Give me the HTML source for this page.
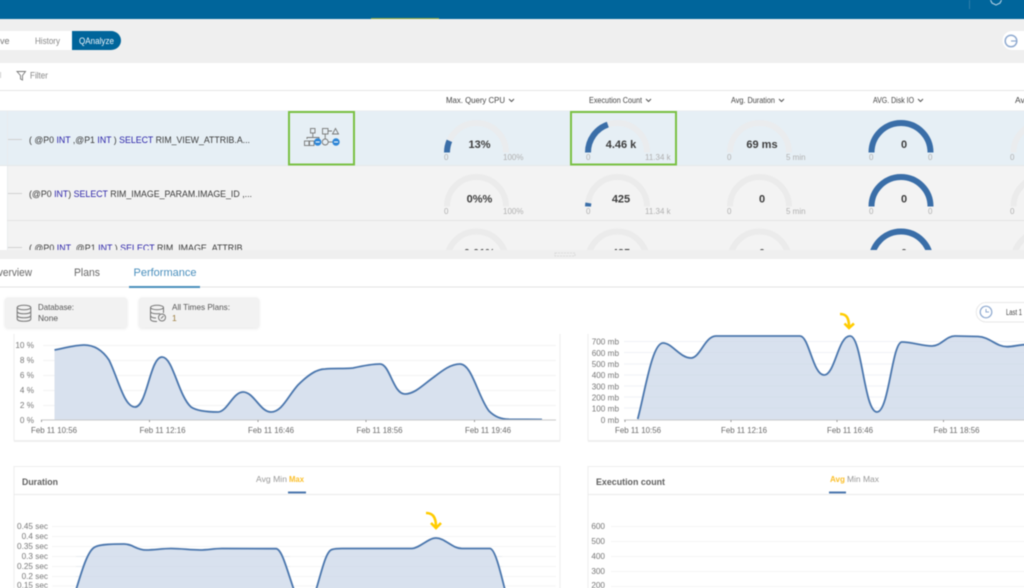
<!DOCTYPE html>
<html lang="en">
<head>
<meta charset="utf-8">
<title>QAnalyze Performance</title>
<style>
html,body{margin:0;padding:0;width:1024px;height:588px;overflow:hidden;background:#fff}
body{position:relative}
svg{display:block;position:absolute;left:-10px;top:-10px;filter:blur(.5px)}
text{font-family:"Liberation Sans",sans-serif;fill:#555}
.s{font-size:8px;fill:#b0b0b0}
.v{font-size:11px;font-weight:bold;fill:#3d3d3d;text-anchor:middle}
.h{font-size:8.5px;fill:#444}
.r{font-size:9.5px;fill:#3a3a3a}
.r tspan{fill:#2a22a8}
.a{font-size:8.5px;fill:#6a6a6a}
.ye{font-size:8.2px;fill:#777;text-anchor:end}
.t{font-size:11px;fill:#666}
.g{stroke:#f3f3f3;stroke-width:1}
.gb{fill:none;stroke:#eaecee;stroke-width:6}
.gf{fill:none;stroke:#3a6ea8;stroke-width:6}
.ch{fill:none;stroke:#555;stroke-width:1}
.ar{fill:#d8e1ee}
.ln{fill:none;stroke:#4a76ad;stroke-width:1.8}
.arrow{fill:none;stroke:#fc0;stroke-width:2.6}
</style>
</head>
<body>
<svg width="1044" height="608" viewBox="-10 -10 1044 608" xmlns="http://www.w3.org/2000/svg">
<rect x="-10" y="-10" width="1044" height="608" fill="#fff"/>

<!-- top bar -->
<rect x="-10" y="-10" width="1044" height="29" fill="#00659b"/>
<rect x="371" y="18" width="68" height="1" fill="#8fa63a"/>
<rect x="969" y="0" width="1" height="9" fill="#2f7fab"/>
<path d="M990.500 0 L992 3 L996 5 L1000 3 L1001.500 0" fill="none" stroke="#a9cbe0" stroke-width="1.200"/>

<!-- gray band -->
<rect x="-10" y="19" width="1044" height="44" fill="#efefef"/>
<rect x="-10" y="31" width="82" height="19" fill="#fff"/>
<text x="0" y="44" style="fill:#777;font-size:9px">ve</text>
<text x="35" y="44" textLength="25" lengthAdjust="spacingAndGlyphs" style="fill:#888;font-size:9px">History</text>
<path d="M72 31 H111 A10 9.500 0 0 1 111 50 H72 Z" fill="#00659b"/>
<text x="79" y="44" textLength="35" lengthAdjust="spacingAndGlyphs" style="fill:#eef5fa;font-size:9px">QAnalyze</text>
<path d="M1034 31 H1012 A9.500 9.500 0 0 0 1012 50 H1034 Z" fill="#fff"/>
<circle cx="1011" cy="41" r="5.800" fill="none" stroke="#8faad0" stroke-width="1.500"/>
<path d="M1011 41 H1016" stroke="#8faad0" stroke-width="1.200" fill="none"/>

<!-- filter bar -->
<rect x="-10" y="63" width="1044" height="27" fill="#fff"/>
<rect x="-10" y="90" width="1044" height="1" fill="#e6e6e6"/>
<path d="M17 71.500 H25.500 L22.500 75.500 V80 L20.500 79 V75.500 Z" fill="none" stroke="#777" stroke-width=".9"/>
<text x="30" y="78.500" textLength="18" lengthAdjust="spacingAndGlyphs" style="fill:#888;font-size:9.500px">Filter</text>
<rect x="0" y="72" width="1" height="6" fill="#ccc"/>

<!-- header -->
<rect x="-10" y="110.500" width="1044" height="1" fill="#e8e8e8"/>
<text class="h" x="446" y="103" textLength="59" lengthAdjust="spacingAndGlyphs">Max. Query CPU</text>
<path class="ch" d="M509 99 L511.500 101.500 L514 99"/>
<text class="h" x="589" y="103" textLength="53" lengthAdjust="spacingAndGlyphs">Execution Count</text>
<path class="ch" d="M646 99 L648.500 101.500 L651 99"/>
<text class="h" x="731" y="103" textLength="44" lengthAdjust="spacingAndGlyphs">Avg. Duration</text>
<path class="ch" d="M779 99 L781.500 101.500 L784 99"/>
<text class="h" x="873" y="103" textLength="41" lengthAdjust="spacingAndGlyphs">AVG. Disk IO</text>
<path class="ch" d="M918 99 L920.500 101.500 L923 99"/>
<text class="h" x="1015" y="103">Avg</text>

<!-- rows -->
<rect x="-10" y="111" width="1044" height="54" fill="#e6eff5"/>
<rect x="-10" y="165" width="17" height="86" fill="#fff"/>
<rect x="7" y="165" width="1027" height="86" fill="#f3f3f3"/>
<rect x="7" y="111" width="1" height="140" fill="#e9ecee"/>
<rect x="-10" y="165" width="1044" height="1" fill="#e4e8ea"/>
<rect x="7" y="220" width="1027" height="1" fill="#e4e4e4"/>
<rect x="8" y="139" width="14" height="1" fill="#d0d0d0"/>
<rect x="8" y="193" width="14" height="1" fill="#d0d0d0"/>
<rect x="8" y="247" width="14" height="1" fill="#d0d0d0"/>

<text class="r" x="29" y="143" textLength="221" lengthAdjust="spacingAndGlyphs">( @P0 <tspan>INT</tspan> ,@P1 <tspan>INT</tspan> ) <tspan>SELECT</tspan> RIM_VIEW_ATTRIB.A...</text>
<text class="r" x="29" y="197" textLength="223" lengthAdjust="spacingAndGlyphs">(@P0 <tspan>INT</tspan>) <tspan>SELECT</tspan> RIM_IMAGE_PARAM.IMAGE_ID ,...</text>
<text class="r" x="29" y="251" textLength="221" lengthAdjust="spacingAndGlyphs">( @P0 <tspan>INT</tspan> ,@P1 <tspan>INT</tspan> ) <tspan>SELECT</tspan> RIM_IMAGE_ATTRIB...</text>

<!-- row 1 gauges -->
<path class="gb" d="M447 152.500 A29.500 29.500 0 0 1 506 152.500"/>
<path class="gf" d="M447 152.500 A29.500 29.500 0 0 1 449.400 140.800"/>
<text class="v" x="479.500" y="148">13%</text>
<text class="s" x="444" y="160">0</text><text class="s" x="503" y="160">100%</text>

<path class="gb" d="M588 152.500 A29.500 29.500 0 0 1 647 152.500"/>
<path class="gf" d="M588 152.500 A29.500 29.500 0 0 1 607.800 124.600"/>
<text class="v" x="621" y="148">4.46 k</text>
<text class="s" x="586" y="160">0</text><text class="s" x="645" y="160">11.34 k</text>

<path class="gb" d="M730 152.500 A29.500 29.500 0 0 1 789 152.500"/>
<text class="v" x="762" y="148">69 ms</text>
<text class="s" x="727" y="160">0</text><text class="s" x="786" y="160">5 min</text>

<path class="gf" d="M871.500 152.500 A29.500 29.500 0 0 1 930.500 152.500"/>
<text class="v" x="904" y="148">0</text>
<text class="s" x="869" y="160">0</text><text class="s" x="928" y="160">0</text>

<path class="gb" d="M1013.500 152.500 A29.500 29.500 0 0 1 1072.500 152.500"/>
<text class="s" x="1010" y="160">0</text>

<!-- row 2 gauges -->
<path class="gb" style="stroke:#ebebeb" d="M447 206.500 A29.500 29.500 0 0 1 506 206.500"/>
<text class="v" x="479.500" y="202.500">0%%</text>
<text class="s" x="444" y="214">0</text><text class="s" x="503" y="214">100%</text>

<path class="gb" style="stroke:#ebebeb" d="M588 206.500 A29.500 29.500 0 0 1 647 206.500"/>
<path class="gf" d="M588 206.500 A29.500 29.500 0 0 1 588.400 203"/>
<text class="v" x="621" y="202.500">425</text>
<text class="s" x="586" y="214">0</text><text class="s" x="645" y="214">11.34 k</text>

<path class="gb" style="stroke:#ebebeb" d="M730 206.500 A29.500 29.500 0 0 1 789 206.500"/>
<text class="v" x="762" y="202.500">0</text>
<text class="s" x="727" y="214">0</text><text class="s" x="786" y="214">5 min</text>

<path class="gf" d="M871.500 206.500 A29.500 29.500 0 0 1 930.500 206.500"/>
<text class="v" x="904" y="202.500">0</text>
<text class="s" x="869" y="214">0</text><text class="s" x="928" y="214">0</text>

<path class="gb" style="stroke:#ebebeb" d="M1013.500 206.500 A29.500 29.500 0 0 1 1072.500 206.500"/>
<text class="s" x="1010" y="214">0</text>

<!-- row 3 gauges -->
<path class="gb" style="stroke:#ebebeb" d="M447 261 A29.500 29.500 0 0 1 506 261"/>
<text class="v" x="479.500" y="256.500">0.01%</text>
<path class="gb" style="stroke:#ebebeb" d="M588 261 A29.500 29.500 0 0 1 647 261"/>
<text class="v" x="621" y="256.500">425</text>
<path class="gb" style="stroke:#ebebeb" d="M730 261 A29.500 29.500 0 0 1 789 261"/>
<text class="v" x="762" y="256.500">0</text>
<path class="gf" d="M871.500 261 A29.500 29.500 0 0 1 930.500 261"/>
<text class="v" x="904" y="256.500">0</text>
<path class="gb" style="stroke:#ebebeb" d="M1013.500 261 A29.500 29.500 0 0 1 1072.500 261"/>

<!-- green highlight boxes -->
<rect x="289" y="112" width="65" height="52.500" fill="none" stroke="#7ac143" stroke-width="2"/>
<rect x="571" y="112" width="105" height="52.500" fill="none" stroke="#7ac143" stroke-width="2"/>

<!-- plan icon -->
<g fill="none" stroke="#777" stroke-width=".9">
<rect x="310.500" y="128.500" width="4.500" height="4.500"/>
<path d="M312.800 133 V137 M307 139 V137.500 H319 V139"/>
<rect x="304.500" y="141" width="4.500" height="4.500"/>
<rect x="309.500" y="141" width="4.500" height="4.500"/>
<rect x="322.500" y="128.500" width="5.500" height="5.500"/>
<path d="M325.200 134 V139.500 M328 131 H332"/>
<path d="M335.500 128.500 L338.500 134 H332.500 Z"/>
<circle cx="325.200" cy="142" r="3"/>
<path d="M328 142 H334"/>
</g>
<circle cx="317.700" cy="142" r="3.700" fill="#2f86d6"/>
<rect x="315.700" y="141.500" width="4" height="1" fill="#fff"/>
<circle cx="336" cy="142" r="3.700" fill="#2f86d6"/>
<rect x="334" y="141.500" width="4" height="1" fill="#fff"/>

<!-- splitter -->
<rect x="-10" y="250" width="1044" height="9" fill="#efefef"/>
<rect x="555" y="253" width="20" height="3" fill="none" stroke="#d4d4d4" stroke-width=".8" stroke-dasharray="2 1"/>

<!-- tabs -->
<rect x="-10" y="259" width="1044" height="75" fill="#fff"/>
<text class="t" x="-10" y="276" textLength="42" lengthAdjust="spacingAndGlyphs">Overview</text>
<text class="t" x="74" y="276" textLength="26" lengthAdjust="spacingAndGlyphs">Plans</text>
<text class="t" x="133.500" y="276" textLength="63" lengthAdjust="spacingAndGlyphs" style="fill:#4a8fbd">Performance</text>
<rect x="-10" y="286.500" width="1044" height="1" fill="#e4e4e4"/>
<rect x="129" y="286" width="71" height="2" fill="#4a90bd"/>

<!-- info cards -->
<g style="filter:drop-shadow(0 1px 1.500px rgba(0,0,0,.1))">
<rect x="5" y="297.500" width="122" height="30" rx="3" fill="#f2f2f2"/>
<rect x="139" y="297.500" width="120" height="30" rx="3" fill="#f2f2f2"/>
</g>
<g fill="none" stroke="#777" stroke-width="1">
<ellipse cx="24" cy="307.500" rx="6.800" ry="2.300"/>
<path d="M17.200 307.500 V319 C17.200 322 30.800 322 30.800 319 V307.500 M17.200 311.500 C17.200 314.500 30.800 314.500 30.800 311.500 M17.200 315.500 C17.200 318.500 30.800 318.500 30.800 315.500"/>
<ellipse cx="157" cy="307.500" rx="6.500" ry="2.200"/>
<path d="M150.500 307.500 V319 C150.500 321 154 321.500 157 321.500 M163.500 307.500 V313 M150.500 311.500 C150.500 314 158 314 160 313.500 M150.500 315.500 C150.500 317.500 154 318 156 318"/>
<circle cx="162" cy="317.500" r="3.500"/>
<path d="M161 318.500 L163.500 316"/>
</g>
<text x="38" y="310" textLength="36" lengthAdjust="spacingAndGlyphs" style="font-size:8.500px;fill:#555">Database:</text>
<text x="38" y="321" textLength="20" lengthAdjust="spacingAndGlyphs" style="font-size:8.500px;fill:#555">None</text>
<text x="172" y="310" textLength="58" lengthAdjust="spacingAndGlyphs" style="font-size:8.500px;fill:#555">All Times Plans:</text>
<text x="172" y="321" style="font-size:8.500px;fill:#9a7a3a">1</text>

<!-- time pill -->
<path d="M1034 302.500 H986 A9.500 9.500 0 0 0 986 322 H1034" fill="#fff" stroke="#e8e8e8"/>
<circle cx="986" cy="312" r="5.800" fill="none" stroke="#8faad0" stroke-width="1.200"/>
<path d="M986 309 V312 H989" fill="none" stroke="#8faad0" stroke-width="1"/>
<text x="1006" y="315" textLength="16" lengthAdjust="spacingAndGlyphs" style="font-size:8px;fill:#444">Last 1</text>

<!-- CHART 1 card -->
<path d="M14 334 V440.500 H560 V334" fill="#fff" stroke="#eeeeee"/>
<rect x="14" y="440.500" width="546" height="1.500" fill="#efefef"/>
<g class="g">
<path d="M43 345.500 H556 M43 360.500 H556 M43 375.500 H556 M43 390.500 H556 M43 405.500 H556"/>
</g>
<path class="ar" d="M54.500 350 C65 348 75 345 84 345 C95 345 103 351 109 360 C118 378 124 407 135 407 C147 407 150 357 162 357 C173 357 178 395 191 407 C197 411 208 412 218 412 C227 412 233 392 243 392 C254 392 260 412 271 412 C282 412 288 396 298 385 C307 376 316 369 325 369 C335 368 343 369 353 368 C362 366 372 364 380 364 C390 364 393 394 405 394 C415 394 424 384 434 377 C443 370 451 364 460 364 C472 364 478 397 489 411 C495 417 501 419 509 419.300 L542 419.500 V420 H54.500 Z"/>
<path class="ln" d="M54.500 350 C65 348 75 345 84 345 C95 345 103 351 109 360 C118 378 124 407 135 407 C147 407 150 357 162 357 C173 357 178 395 191 407 C197 411 208 412 218 412 C227 412 233 392 243 392 C254 392 260 412 271 412 C282 412 288 396 298 385 C307 376 316 369 325 369 C335 368 343 369 353 368 C362 366 372 364 380 364 C390 364 393 394 405 394 C415 394 424 384 434 377 C443 370 451 364 460 364 C472 364 478 397 489 411 C495 417 501 419 509 419.300 L542 419.500"/>
<rect x="41" y="419.500" width="515" height="1" fill="#c9c9c9"/>
<path d="M41.500 420 V422 M149.500 420 V422 M258 420 V422 M366 420 V422 M474.500 420 V422" stroke="#999" stroke-width="1"/>
<text class="ye" x="34" y="348">10 %</text>
<text class="ye" x="34" y="363">8 %</text>
<text class="ye" x="34" y="378">6 %</text>
<text class="ye" x="34" y="393">4 %</text>
<text class="ye" x="34" y="408">2 %</text>
<text class="ye" x="34" y="423">0 %</text>
<text class="a" x="31" y="433" textLength="46" lengthAdjust="spacingAndGlyphs">Feb 11 10:56</text>
<text class="a" x="139.500" y="433" textLength="46" lengthAdjust="spacingAndGlyphs">Feb 11 12:16</text>
<text class="a" x="248" y="433" textLength="46" lengthAdjust="spacingAndGlyphs">Feb 11 16:46</text>
<text class="a" x="356.500" y="433" textLength="46" lengthAdjust="spacingAndGlyphs">Feb 11 18:56</text>
<text class="a" x="465" y="433" textLength="46" lengthAdjust="spacingAndGlyphs">Feb 11 19:46</text>

<!-- CHART 2 card -->
<path d="M588 334 V440.500 H1034" fill="#fff" stroke="#eeeeee"/>
<rect x="588" y="440.500" width="446" height="1.500" fill="#efefef"/>
<path class="ar" d="M637.700 419 C645 392 652 343 663 343 C672 343 680 358 691 358 C700 358 705 336 716 336 L800 336 C809 336 813 375 824 375 C835 375 838 336 850 336 C862 336 864 412 877 412 C889 412 892 342 902 342 C912 342 922 346 932 346 C941 346 946 336 955 336 L978 336.500 C990 337 996 346.700 1007 346.700 C1013 346.700 1018 345 1024 344.700 L1034 344.500 V420 H637.700 Z"/>
<path d="M624 341.500 H1034 M624 352.500 H1034 M624 364 H1034 M624 375 H1034 M624 386 H1034 M624 397 H1034 M624 408 H1034" stroke="#c9d3e0" stroke-opacity=".3" stroke-width="1"/>
<path class="ln" d="M637.700 419 C645 392 652 343 663 343 C672 343 680 358 691 358 C700 358 705 336 716 336 L800 336 C809 336 813 375 824 375 C835 375 838 336 850 336 C862 336 864 412 877 412 C889 412 892 342 902 342 C912 342 922 346 932 346 C941 346 946 336 955 336 L978 336.500 C990 337 996 346.700 1007 346.700 C1013 346.700 1018 345 1024 344.700 L1034 344.500"/>
<rect x="624" y="419.500" width="410" height="1" fill="#c9c9c9"/>
<path d="M625 420 V422 M731 420 V422 M837 420 V422 M943.500 420 V422" stroke="#999" stroke-width="1"/>
<text class="ye" x="619" y="344.500">700 mb</text>
<text class="ye" x="619" y="356">600 mb</text>
<text class="ye" x="619" y="367">500 mb</text>
<text class="ye" x="619" y="378">400 mb</text>
<text class="ye" x="619" y="389.500">300 mb</text>
<text class="ye" x="619" y="400.500">200 mb</text>
<text class="ye" x="619" y="411.500">100 mb</text>
<text class="ye" x="619" y="423">0 mb</text>
<text class="a" x="615" y="433" textLength="46" lengthAdjust="spacingAndGlyphs">Feb 11 10:56</text>
<text class="a" x="721" y="433" textLength="46" lengthAdjust="spacingAndGlyphs">Feb 11 12:16</text>
<text class="a" x="827" y="433" textLength="46" lengthAdjust="spacingAndGlyphs">Feb 11 16:46</text>
<text class="a" x="933.500" y="433" textLength="46" lengthAdjust="spacingAndGlyphs">Feb 11 18:56</text>

<!-- arrow chart 2 -->
<path class="arrow" d="M840 314 C846 314 849 317 849 327"/>
<path class="arrow" d="M844.500 323.500 L849 328 L854 323.500"/>

<!-- CHART 3 card -->
<path d="M14 598 V466.500 H560 V598" fill="#fff" stroke="#eeeeee"/>
<rect x="14" y="494" width="546" height="1" fill="#ebebeb"/>
<text x="22" y="485" textLength="36" lengthAdjust="spacingAndGlyphs" style="font-size:9.500px;font-weight:bold;fill:#5f5f5f">Duration</text>
<text x="256" y="482" textLength="31" lengthAdjust="spacingAndGlyphs" style="font-size:8.500px;fill:#999">Avg Min</text>
<text x="289" y="482" textLength="15" lengthAdjust="spacingAndGlyphs" style="font-size:8.500px;font-weight:bold;fill:#fbc02d">Max</text>
<rect x="288" y="491.500" width="18" height="2" fill="#4a76ad"/>
<path d="M52 526.500 H556 M52 536.500 H556 M52 546.500 H556 M52 556.500 H556 M52 566.500 H556 M52 576.500 H556 M52 586 H556" stroke="#f5f5f5"/>
<path class="ar" d="M76 590 C82 570 88 550 95 547 C100 544 115 544 124 544 C133 544 136 550 146 550 C155 550 162 548.500 171 548.500 C182 548.500 190 550 200 550 C208 550 214 548.500 222 548.500 L276 548.700 C282 549 287 570 294 590 Z M316 590 C322 570 326 551 332 549.500 C335 548.500 338 548.500 342 548.500 L412 548.500 C420 548 428 538 436 538 C445 538 452 548.500 462 548.500 L490 548.500 C495 549 500 570 505 590 Z"/>
<path d="M76 556.500 H290 M76 566.500 H290 M76 576.500 H290 M322 556.500 H502 M322 566.500 H502 M322 576.500 H502" stroke="#c9d3e0" stroke-opacity=".25"/>
<path class="ln" d="M76 590 C82 570 88 550 95 547 C100 544 115 544 124 544 C133 544 136 550 146 550 C155 550 162 548.500 171 548.500 C182 548.500 190 550 200 550 C208 550 214 548.500 222 548.500 L276 548.700 C282 549 287 570 294 590 M316 590 C322 570 326 551 332 549.500 C335 548.500 338 548.500 342 548.500 L412 548.500 C420 548 428 538 436 538 C445 538 452 548.500 462 548.500 L490 548.500 C495 549 500 570 505 590"/>
<text class="ye" x="48" y="529">0.45 sec</text>
<text class="ye" x="48" y="539">0.4 sec</text>
<text class="ye" x="48" y="549">0.35 sec</text>
<text class="ye" x="48" y="559">0.3 sec</text>
<text class="ye" x="48" y="569">0.25 sec</text>
<text class="ye" x="48" y="579">0.2 sec</text>
<text class="ye" x="48" y="588">0.15 sec</text>
<path class="arrow" d="M426 513 C432 513 436 516 436 527"/>
<path class="arrow" d="M431 523 L436 528 L441 523"/>

<!-- CHART 4 card -->
<path d="M588 598 V466.500 H1034" fill="#fff" stroke="#eeeeee"/>
<rect x="588" y="494" width="446" height="1" fill="#ebebeb"/>
<text x="596" y="485" textLength="69" lengthAdjust="spacingAndGlyphs" style="font-size:9.500px;font-weight:bold;fill:#5f5f5f">Execution count</text>
<text x="830" y="482" textLength="15" lengthAdjust="spacingAndGlyphs" style="font-size:8.500px;font-weight:bold;fill:#fbc02d">Avg</text>
<text x="847" y="482" textLength="32" lengthAdjust="spacingAndGlyphs" style="font-size:8.500px;fill:#999">Min Max</text>
<rect x="829" y="491.500" width="17" height="2" fill="#4a76ad"/>
<path d="M611 526.500 H1034 M611 541.500 H1034 M611 556.500 H1034 M611 571.500 H1034 M611 586.500 H1034" stroke="#f5f5f5"/>
<text class="ye" x="605" y="529">600</text>
<text class="ye" x="605" y="544">500</text>
<text class="ye" x="605" y="559">400</text>
<text class="ye" x="605" y="574">300</text>
<text class="ye" x="605" y="588">200</text>
</svg>
</body>
</html>
